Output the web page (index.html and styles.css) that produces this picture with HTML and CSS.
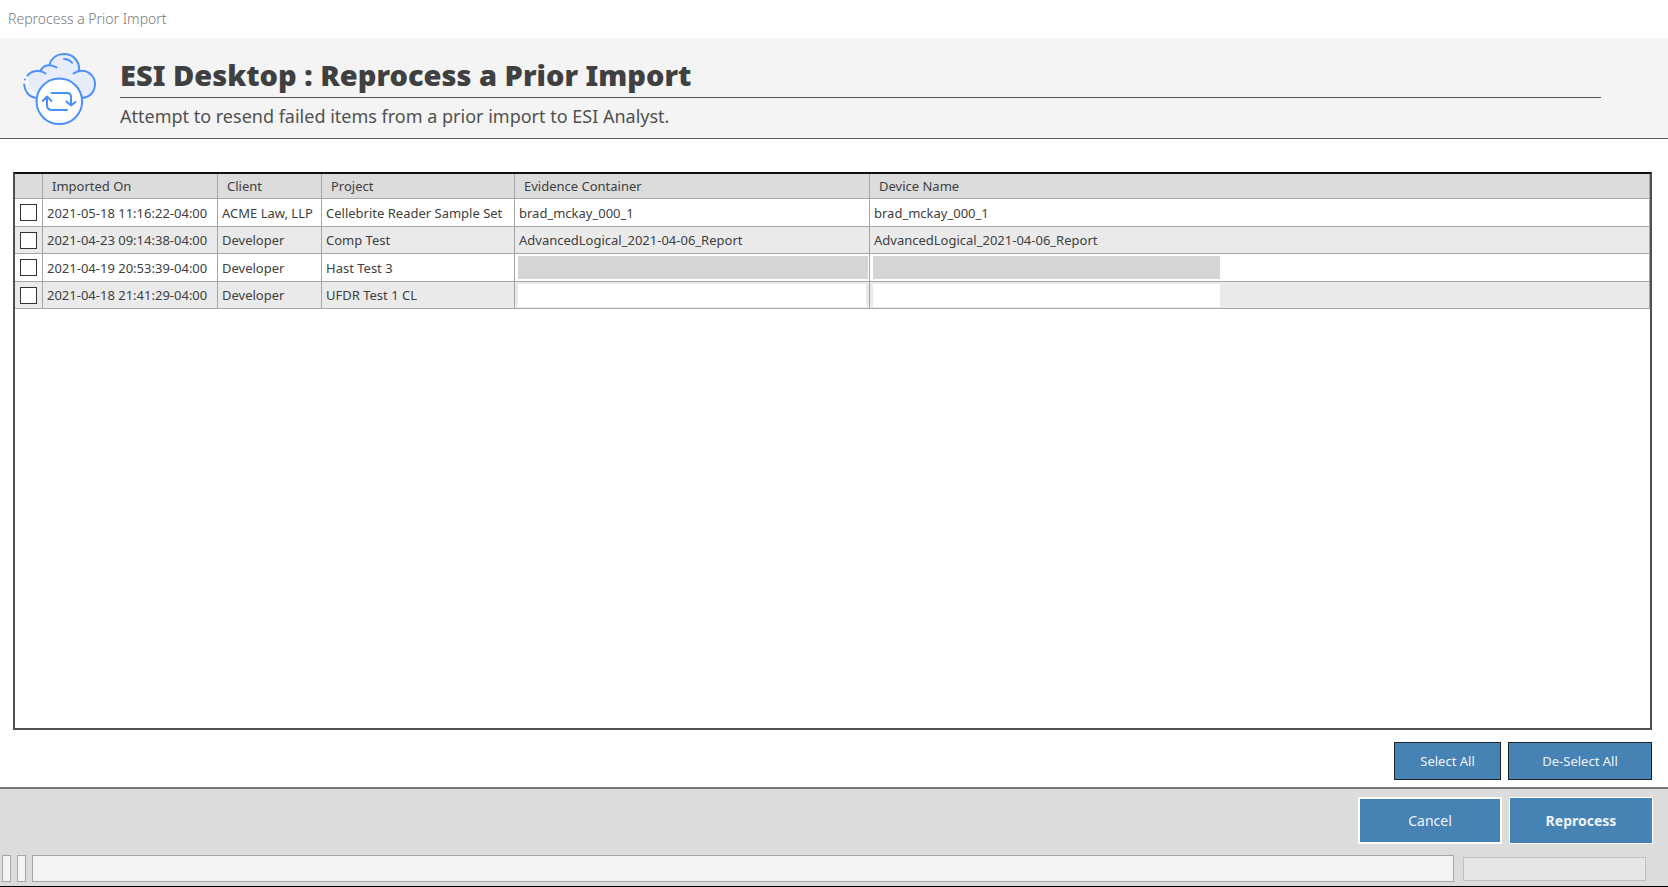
FILE: index.html
```html
<!DOCTYPE html>
<html lang="en">
<head>
<meta charset="utf-8">
<title>Reprocess a Prior Import</title>
<link rel="stylesheet" href="styles.css">
</head>
<body>
<div class="titlebar">Reprocess a Prior Import</div>
<header class="banner">
  <svg class="banner-icon" viewBox="0 0 90 90" fill="none" stroke="#4a90fb" stroke-width="2" stroke-linecap="round" stroke-linejoin="round" aria-hidden="true">
    <path fill="#e6ecfa" stroke="none" d="M20 52.500C13 51 9 45 9 39C9 31 15 25.500 22 25.500L25 27C25 23 29 20 34 20C36 13 42 9 49 9C58 9 64 16 64 25.500C73 24 80 31 80 39C80 47 75 52.500 68 52.500Z"/>
    <path fill="#f4f8ff" stroke="none" d="M20 52.500C13 51 9 45 9 39C9 35 10 32 12 30C13 39 16 46 23 49Z"/>
    <path d="M12.500 30.500C17 25 25 24.500 30.500 28.500"/>
    <path d="M9.200 39.500C9.500 46 13.500 51.500 20 52.700"/>
    <path d="M10 34.500v.1"/>
    <path d="M25.500 26.500C27 20.500 35 18 41.500 22.500"/>
    <path d="M34.500 19.500C36.500 13 42 9 49 9C58 9 65 16 64 26"/>
    <path d="M58.500 28.500C62 26 65 25.500 67 25.700C74.500 26 80 32 80 39C80 47 74.500 52.500 67.500 52.700"/>
    <path d="M49 14C52.500 14 55 15.500 57 17.700"/>
    <circle cx="44.300" cy="56.300" r="22.800" fill="#fff"/>
    <path d="M36.500 48H52C54.500 48 56 49.500 56 52V60M51.500 56.500L56 60.500L60.500 57"/>
    <path d="M52 65H37C34 65 32 63 32 60V52M27.700 56L32 51.500L36.500 56"/>
  </svg>
  <div class="banner-text">
    <h1 class="banner-heading">ESI Desktop : Reprocess a Prior Import</h1>
    <p class="banner-note">Attempt to resend failed items from a prior import to ESI Analyst.</p>
  </div>
</header>
<main class="content">
  <div class="grid-frame">
    <table class="grid">
      <colgroup><col class="col-pick"><col class="col-date"><col class="col-client"><col class="col-project"><col class="col-evidence"><col></colgroup>
      <thead>
        <tr><th></th><th>Imported On</th><th>Client</th><th>Project</th><th>Evidence Container</th><th>Device Name</th></tr>
      </thead>
      <tbody>
        <tr><td class="pick"><input type="checkbox" aria-label="Import 2021-05-18 11:16:22"></td><td>2021-05-18 11:16:22-04:00</td><td>ACME Law, LLP</td><td>Cellebrite Reader Sample Set</td><td>brad_mckay_000_1</td><td>brad_mckay_000_1</td></tr>
        <tr><td class="pick"><input type="checkbox" aria-label="Import 2021-04-23 09:14:38"></td><td>2021-04-23 09:14:38-04:00</td><td>Developer</td><td>Comp Test</td><td>AdvancedLogical_2021-04-06_Report</td><td>AdvancedLogical_2021-04-06_Report</td></tr>
        <tr><td class="pick"><input type="checkbox" aria-label="Import 2021-04-19 20:53:39"></td><td>2021-04-19 20:53:39-04:00</td><td>Developer</td><td>Hast Test 3</td><td class="masked"><span class="mask mask-gray"></span></td><td class="masked"><span class="mask mask-gray mask-device"></span></td></tr>
        <tr><td class="pick"><input type="checkbox" aria-label="Import 2021-04-18 21:41:29"></td><td>2021-04-18 21:41:29-04:00</td><td>Developer</td><td>UFDR Test 1 CL</td><td class="masked"><span class="mask mask-white"></span></td><td class="masked"><span class="mask mask-white mask-device"></span></td></tr>
      </tbody>
    </table>
  </div>
  <div class="selection">
    <button type="button" class="btn btn-select">Select All</button>
    <button type="button" class="btn btn-deselect">De-Select All</button>
  </div>
</main>
<footer class="footer">
  <div class="actions">
    <button type="button" class="btn btn-cancel">Cancel</button>
    <button type="button" class="btn btn-go">Reprocess</button>
  </div>
  <div class="status">
    <span class="slot slot-small"></span>
    <span class="slot slot-small"></span>
    <span class="slot slot-message"></span>
    <span class="progress"></span>
  </div>
</footer>
</body>
</html>
```
FILE: styles.css
```css
* { box-sizing: border-box; }

body {
  margin: 0;
  min-height: 100vh;
  display: flex;
  flex-direction: column;
  background: #fff;
  color: #404040;
  font-family: "Noto Sans", "Open Sans", sans-serif;
  font-size: 13px;
}

.titlebar {
  height: 38px;
  padding-left: 8px;
  line-height: 38px;
  font-size: 14px;
  font-weight: 300;
  color: #777;
}

.banner {
  display: flex;
  height: 101px;
  padding: 7px 67px 0 15px;
  background: #f4f4f4;
  border-bottom: 1px solid #555;
}

.banner-icon { width: 90px; height: 90px; flex: none; }

.banner-text { flex: 1; margin-left: 15px; }

.banner-heading {
  margin: 0;
  height: 53px;
  line-height: 60px;
  border-bottom: 1px solid #555;
  font-size: 29px;
  font-weight: 900;
  color: #404040;
}

.banner-note {
  margin: 0;
  line-height: 37px;
  font-size: 18px;
  color: #505050;
}

.content {
  flex: 1;
  display: flex;
  flex-direction: column;
  padding: 33px 16px 7px 13px;
}

.grid-frame {
  flex: 1;
  border: 2px solid #505050;
  border-top-color: #111;
}

.grid {
  width: 100%;
  table-layout: fixed;
  border-collapse: separate;
  border-spacing: 0;
}

.col-pick { width: 28px; }
.col-date { width: 175px; }
.col-client { width: 104px; }
.col-project { width: 193px; }
.col-evidence { width: 355px; }

.grid th,
.grid td {
  padding: 0 4px;
  border-right: 1px solid #a6a6a6;
  border-bottom: 1px solid #a6a6a6;
  text-align: left;
  white-space: nowrap;
}

.grid th {
  height: 25px;
  padding: 0 9px;
  background: #dcdcdc;
  font-weight: 400;
}

.grid td { height: 28px; }
.grid tr:nth-child(even) td { height: 27px; background: #eaeaea; }

.grid td.pick { padding: 0 0 0 5px; }

.pick input {
  appearance: none;
  display: block;
  width: 17px;
  height: 17px;
  margin: 0;
  border: 1px solid #333;
  background: #fff;
}

.grid td.masked { padding: 0 1px 0 3px; }

.mask { display: block; height: 23px; }
.mask-gray { background: #d5d5d5; }
.mask-white { margin-right: 2px; background: #fff; }
.mask-device { width: 347px; }

.selection {
  display: flex;
  justify-content: flex-end;
  gap: 7px;
  margin-top: 12px;
}

.btn {
  padding: 0;
  background: #4682b4;
  color: #f0f4f8;
  font: inherit;
}

.btn-select,
.btn-deselect { height: 38px; border: 1px solid #222; }
.btn-select { width: 107px; }
.btn-deselect { width: 144px; }

.footer {
  border-top: 2px solid #777;
  border-bottom: 1px solid #000;
  background: #dcdcdc;
}

.actions {
  display: flex;
  justify-content: flex-end;
  gap: 7px;
  padding: 8px 15px 0 0;
}

.btn-cancel,
.btn-go {
  width: 144px;
  height: 47px;
  border: 2px solid #fff;
  font-size: 14px;
}

.btn-go { border: 1px solid #fff; font-weight: 700; }

.status {
  display: flex;
  align-items: center;
  gap: 6px;
  padding: 11px 22px 4px 2px;
}

.slot {
  height: 27px;
  border: 1px solid #a6a6a6;
  background: #f4f4f4;
}

.slot-small { width: 9px; }
.slot-message { flex: 1; }

.progress {
  width: 183px;
  height: 24px;
  margin-left: 3px;
  border: 1px solid #c0c0c0;
  background: #e6e6e6;
}
```
